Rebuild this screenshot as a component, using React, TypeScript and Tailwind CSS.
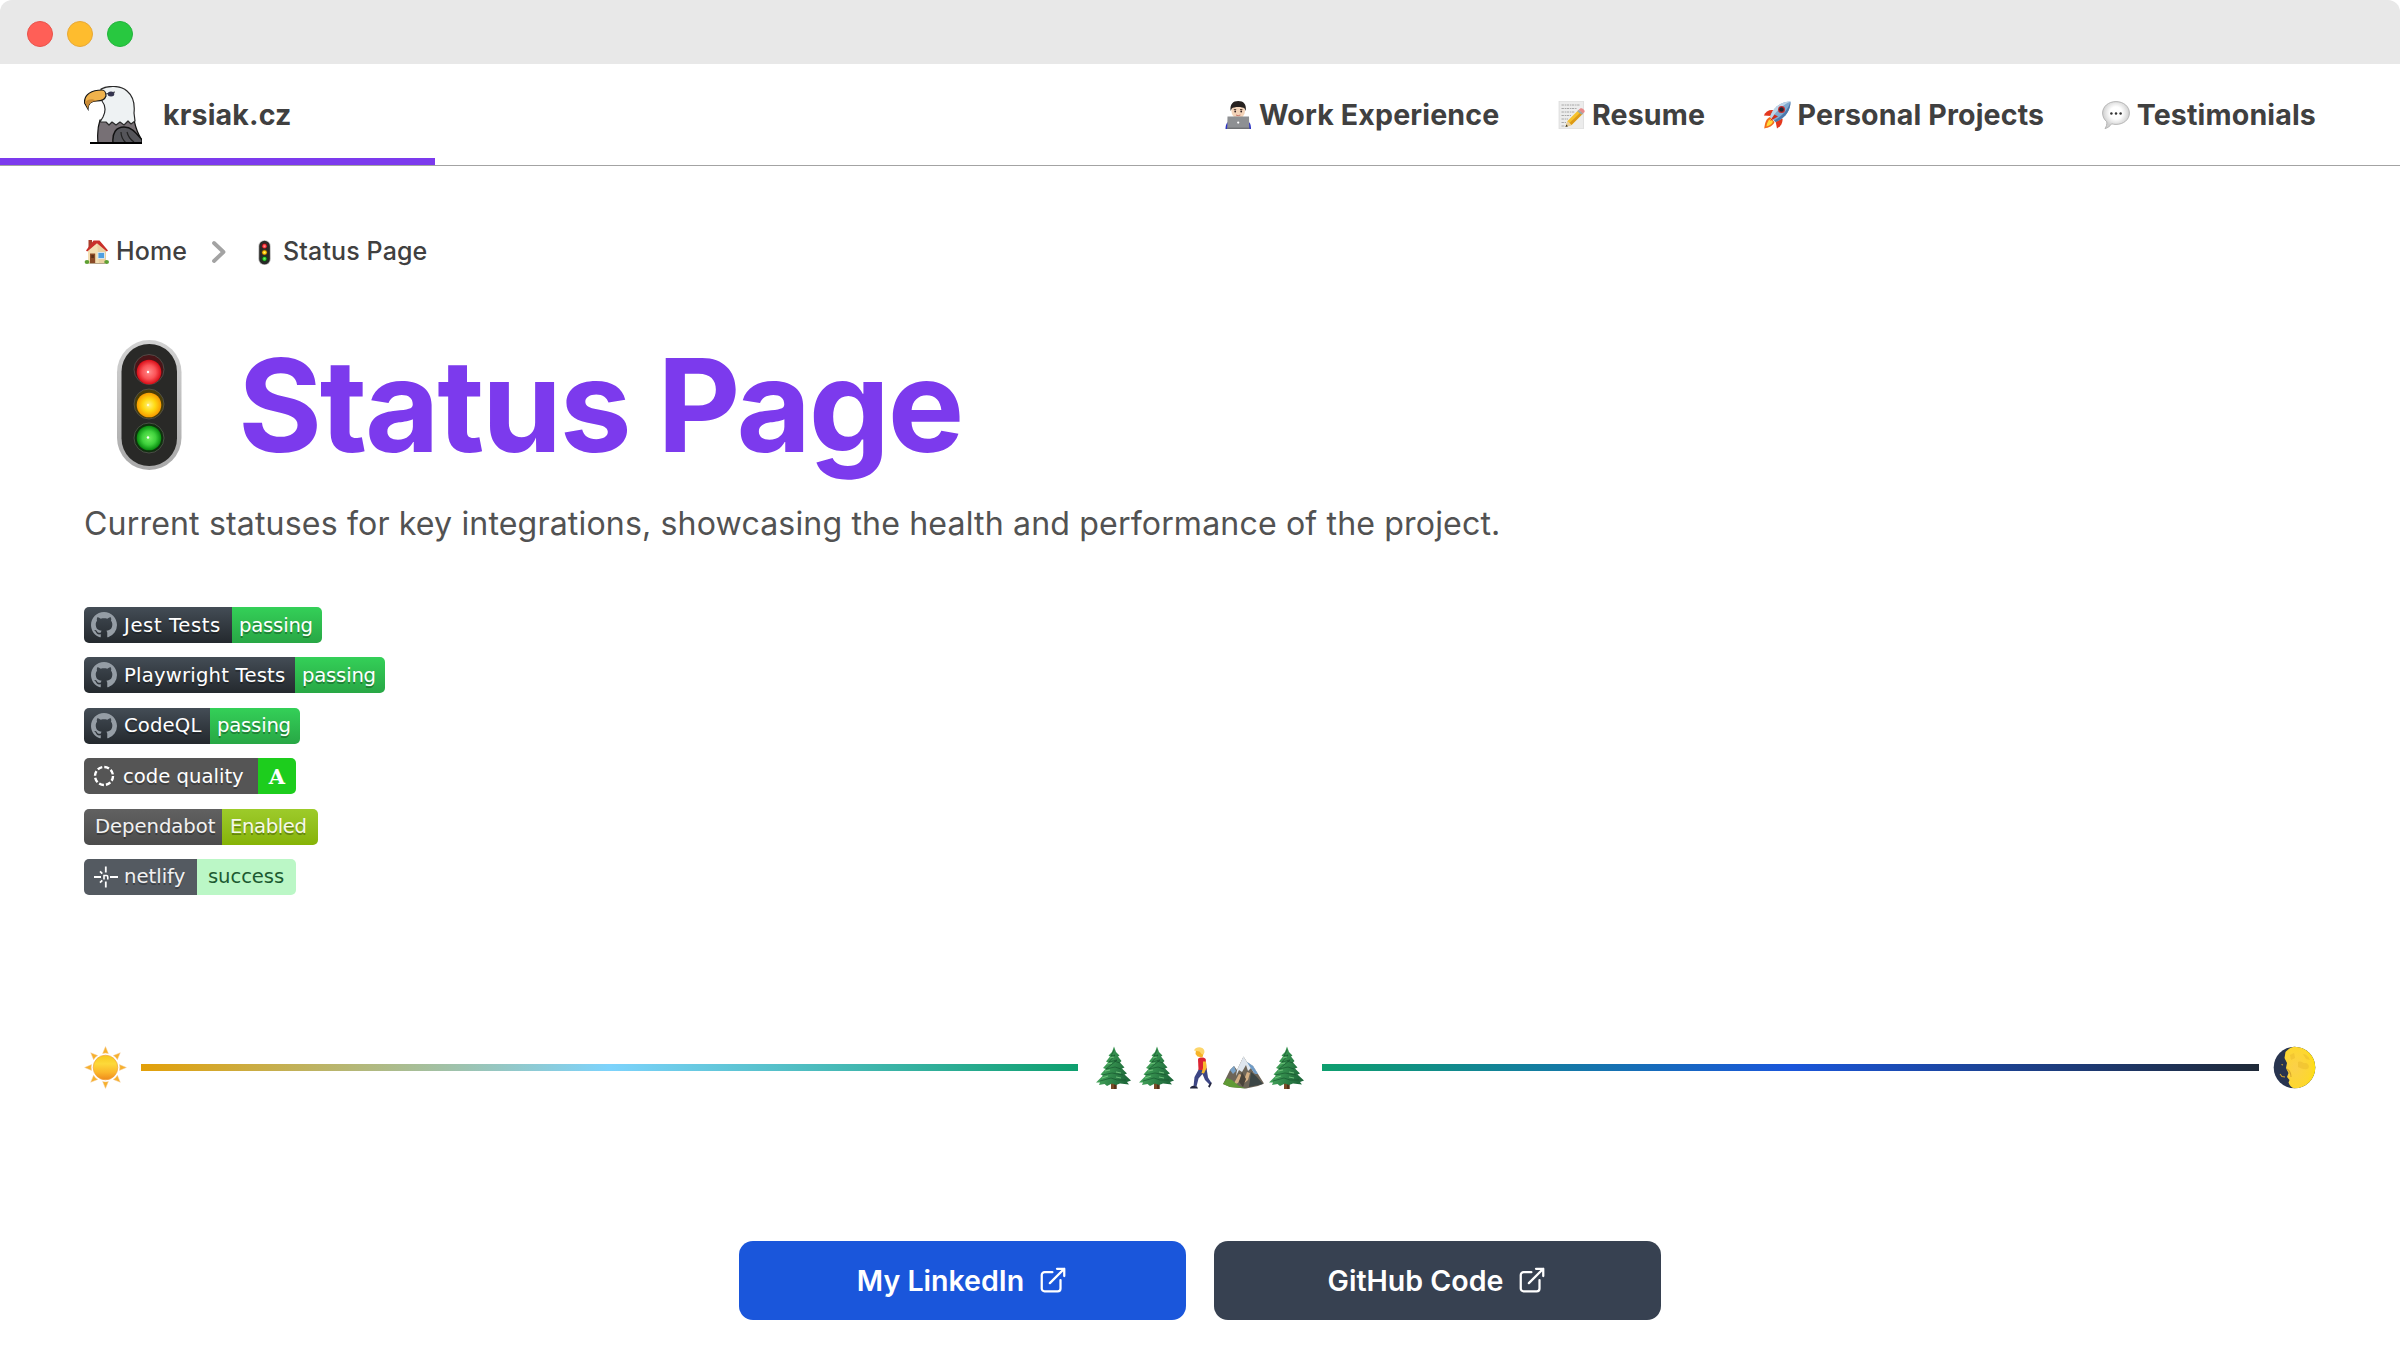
import type { ReactNode } from 'react';

type IconProps = { className?: string };

function Eagle({ className }: IconProps) {
  return (
    <svg viewBox="0 0 58 58" className={className}>
      <path d="M14 57C13 47 14 40 16 34L50 34C52 43 55 50 58 54V57Z" fill="#777075" stroke="#111" strokeWidth="1.2" />
      <path d="M29 57C28 47 32 41 40 41C48 41 52 47 58 54V57Z" fill="#55555a" stroke="#111" strokeWidth="1.4" />
      <path d="M37 46C37 51 39 54 42 57M43 46C44 50 47 54 50 56" stroke="#222" strokeWidth="1.2" fill="none" />
      <path d="M17 3C24 -0.5 36 -1 43 5C49 10 51 18 50 27L51 35L47 38L44 35L40 39L36 36L32 39L28 36L25 39L22 36L16 36L19 31C22 25 22 20 18 15Z" fill="#eef2f3" stroke="#2a2a2a" strokeWidth="1.2" strokeLinejoin="round" />
      <path d="M18 4C8 4 0 8 0.5 17L4 23C4 17 8 15 13 15C18 15 21 13 22 10C22 6 20 4 18 4Z" fill="#f0b24c" stroke="#161616" strokeWidth="1.2" />
      <path d="M1 16L4 23C4 18 7 15 13 15C8 12 4 13 1 16Z" fill="#c98a35" />
      <path d="M22 8L31 6" stroke="#333" strokeWidth="1" />
      <ellipse cx="27" cy="8" rx="3.3" ry="2.5" fill="#34344e" />
      <path d="M6 57H58" stroke="#000" strokeWidth="2" />
    </svg>
  );
}

function TrafficLight({ className }: IconProps) {
  return (
    <svg viewBox="0 0 130 130" className={className}>
      <defs>
        <linearGradient id="tl-rim" x1="0" y1="0" x2="0" y2="1">
          <stop offset="0" stopColor="#d2d2d2" />
          <stop offset="1" stopColor="#a9a9a9" />
        </linearGradient>
        <radialGradient id="tl-red">
          <stop offset="0" stopColor="#ff8a8a" />
          <stop offset="0.55" stopColor="#fb5458" />
          <stop offset="1" stopColor="#d90d17" />
        </radialGradient>
        <radialGradient id="tl-yellow">
          <stop offset="0" stopColor="#fff27e" />
          <stop offset="0.5" stopColor="#ffd912" />
          <stop offset="1" stopColor="#f79a00" />
        </radialGradient>
        <radialGradient id="tl-green">
          <stop offset="0" stopColor="#70ee5e" />
          <stop offset="0.55" stopColor="#3fd13c" />
          <stop offset="1" stopColor="#078a0e" />
        </radialGradient>
      </defs>
      <rect x="33" y="0" width="64.5" height="130" rx="32.2" fill="url(#tl-rim)" />
      <rect x="37.5" y="4" width="55.5" height="122" rx="27.7" fill="#292927" />
      <circle cx="65" cy="29.5" r="15" fill="#4a1518" stroke="#565650" strokeWidth="0.8" />
      <circle cx="65" cy="64" r="15" fill="#4a3e08" stroke="#565650" strokeWidth="0.8" />
      <circle cx="65" cy="98" r="15" fill="#10300f" stroke="#565650" strokeWidth="0.8" />
      <circle cx="65" cy="32" r="12.3" fill="url(#tl-red)" />
      <circle cx="65" cy="65" r="12.3" fill="url(#tl-yellow)" />
      <circle cx="65" cy="98" r="12.3" fill="url(#tl-green)" />
      <circle cx="64" cy="32" r="1.2" fill="#fff" />
      <circle cx="64" cy="65" r="1.2" fill="#fffbd0" />
      <circle cx="64" cy="97.5" r="1.2" fill="#fff" />
    </svg>
  );
}

function House({ className }: IconProps) {
  return (
    <svg viewBox="0 0 26 26" className={className}>
      <rect x="4.5" y="1" width="3.5" height="8" fill="#a8402c" />
      <path d="M4 11L13 3L22 11V24.5H4Z" fill="#f3deb2" />
      <path d="M13 3L22 11V24.5H15Z" fill="#ead0a0" />
      <path d="M2 11.5L9.5 1.5H15.5L24 11.5L22.8 12.5L13 4.2L3.2 12.5Z" fill="#c9302a" />
      <rect x="6" y="14.5" width="5.2" height="10" fill="#8a4a26" />
      <rect x="7.3" y="16" width="2.6" height="3" fill="#5b2f18" />
      <rect x="14" y="13.5" width="6.5" height="6" fill="#4f9fe0" stroke="#dce9f2" strokeWidth="0.9" />
      <ellipse cx="3" cy="23" rx="2.4" ry="1.9" fill="#5fa033" />
      <ellipse cx="22.6" cy="23" rx="2.4" ry="1.9" fill="#5fa033" />
      <rect x="5.5" y="24" width="16" height="1" fill="#b5a58c" />
    </svg>
  );
}

function Technologist({ className }: IconProps) {
  return (
    <svg viewBox="0 0 28 28" className={className}>
      <path d="M1.5 28C1.5 22 4 20 8 19H21C25 20 27 22 27 28Z" fill="#2b32c4" />
      <rect x="11" y="14" width="6" height="6" fill="#e0b595" />
      <ellipse cx="14.2" cy="9.8" rx="6.8" ry="7.6" fill="#f3d3b8" />
      <path d="M6.6 10C5.8 3 9 0 14.2 0C19.6 0 22.6 3 21.8 10L20.6 7.5C18.5 5.5 10 5.5 7.8 7.5Z" fill="#26211f" />
      <path d="M9.8 8.6H12.2M16 8.6H18.4" stroke="#3b2a20" strokeWidth="0.9" />
      <circle cx="11.2" cy="10.5" r="0.9" fill="#322" />
      <circle cx="17.2" cy="10.5" r="0.9" fill="#322" />
      <path d="M12 14Q14.2 15.4 16.4 14" stroke="#c46c60" strokeWidth="0.9" fill="none" />
      <path d="M3.5 15.5H25L25.3 28H3.2Z" fill="#8e9093" />
      <path d="M3.2 26.6H25.3V28H3.2Z" fill="#6f7174" />
      <circle cx="14.2" cy="21.6" r="1.1" fill="#fff" />
    </svg>
  );
}

function Memo({ className }: IconProps) {
  return (
    <svg viewBox="0 0 28 28" className={className}>
      <rect x="2" y="0" width="24.5" height="28" fill="#ececec" stroke="#d4d4d4" strokeWidth="0.6" />
      <path d="M4.5 4H23M4.5 7.5H20M4.5 11H18M4.5 14.5H14M4.5 18H11M4.5 21.5H9M4.5 25H8" stroke="#a0a0a0" strokeWidth="0.9" strokeDasharray="2.4 0.8 1.4 0.6" />
      <path d="M8.5 26L10.5 20L21.5 9L26 12.5L14.5 24Z" fill="#f6c22d" />
      <path d="M12.5 22L24 11L26 12.5L14.5 24Z" fill="#dd9a17" />
      <path d="M8.5 26L10.5 20L14.5 24Z" fill="#e8cf9f" />
      <path d="M8.5 26L9.3 23.6L11 25.2Z" fill="#333" />
      <path d="M21.5 9L23.2 7.4C25.5 7 28 9 27.6 11L26 12.5Z" fill="#e98a8a" />
      <path d="M20.2 10.3L21.6 8.9L26.2 12.4L24.8 13.8Z" fill="#9aa7ad" />
    </svg>
  );
}

function Rocket({ className }: IconProps) {
  return (
    <svg viewBox="0 0 28 28" className={className}>
      <path d="M10 9C6 8.5 2.5 10.5 0.8 14.5L8 15Z" fill="#e3371e" />
      <path d="M19.5 17.5C20 21.5 18 25 14 27.5L12.5 20Z" fill="#e3371e" />
      <path d="M7 16C3 17.5 2 22 1.2 27.5C6 26.5 10 25 11.5 21Z" fill="#f36b1c" />
      <path d="M7.5 18C5 19.5 4 22 3.4 25.5C6.5 24.5 8.6 23.4 10 20.8Z" fill="#ffdc3c" />
      <path d="M27.5 0.5C19 0.5 11 5 7 15.5L12.5 21C22.5 17 27.6 9.5 27.5 0.5Z" fill="#7fa9cf" />
      <path d="M27.5 0.5C19 0.5 11 5 7 15.5L9 17.5C13 10 19 4.5 27.5 0.5Z" fill="#bdd5e8" />
      <path d="M27.5 0.5C27.6 9.5 22.5 17 12.5 21L11 19.5C19 15.5 25 9 27.5 0.5Z" fill="#4c79ac" />
      <circle cx="18.5" cy="8.5" r="3.5" fill="#c62a2a" />
      <circle cx="18.5" cy="8.5" r="2.3" fill="#1f2937" />
      <path d="M11.5 13.5L15 15.5L7 20Z" fill="#cf2a1b" />
    </svg>
  );
}

function Speech({ className }: IconProps) {
  return (
    <svg viewBox="0 0 28 28" className={className}>
      <defs>
        <radialGradient id="sp-fill" cx="0.5" cy="0.42">
          <stop offset="0.45" stopColor="#fff" />
          <stop offset="1" stopColor="#cfcfcf" />
        </radialGradient>
      </defs>
      <path d="M14 0.6C21.6 0.6 27.4 5.6 27.4 12C27.4 18.6 21.6 23.4 14 23.4C12.4 23.4 11 23.2 9.6 22.8C8.2 25 6 26.8 3 27.6C4.4 25.6 5 23.4 4.8 20.8C2.2 18.600 0.600 15.600 0.600 12C0.600 5.600 6.400 0.600 14 0.600Z" fill="url(#sp-fill)" stroke="#b0b0b0" strokeWidth="0.9" />
      <circle cx="9.4" cy="12.4" r="1.25" fill="#333" />
      <circle cx="14" cy="12.4" r="1.25" fill="#333" />
      <circle cx="18.6" cy="12.4" r="1.25" fill="#333" />
    </svg>
  );
}

function Sun({ className }: IconProps) {
  const rays = [0, 45, 90, 135, 180, 225, 270, 315];
  return (
    <svg viewBox="0 0 43 43" className={className}>
      <defs>
        <linearGradient id="sun-disc" x1="0" y1="0" x2="0" y2="1">
          <stop offset="0" stopColor="#f6c81e" />
          <stop offset="0.35" stopColor="#fdd93a" />
          <stop offset="0.7" stopColor="#fbb62a" />
          <stop offset="1" stopColor="#ee8a1c" />
        </linearGradient>
      </defs>
      {rays.map((a) => (
        <path key={a} d="M18.6 7.6L21.5 0.6L24.4 7.6Q21.5 6.600 18.600 7.600Z" fill="#f7b02c" stroke="#f5cfa0" strokeWidth="0.5" transform={`rotate(${a} 21.5 21.5)`} />
      ))}
      <circle cx="21.5" cy="21.5" r="12.3" fill="url(#sun-disc)" stroke="#f0a43c" strokeWidth="0.7" />
    </svg>
  );
}

function Tree({ className }: IconProps) {
  return (
    <svg viewBox="0 0 43 43" className={className}>
      <defs>
        <linearGradient id="tree-leaf" x1="0" y1="0" x2="1" y2="0.3">
          <stop offset="0" stopColor="#55b868" />
          <stop offset="0.5" stopColor="#36914f" />
          <stop offset="1" stopColor="#1f6a3b" />
        </linearGradient>
      </defs>
      <path d="M19 34H24.5V43H19Z" fill="#7b4a26" />
      <path d="M22 34H24.5V43H22Z" fill="#56321a" />
      <path d="M22 0.5L24 6L27.5 9.500L26 10.500L29.500 15L28 16.500L32.500 21.500L30 22.500L35 27.500L32.500 28.500L39 34.500L35 36L37 38.500L28 37.500L24 39L20 37.500L15 40L12.500 38L7 39L8 36.500L4 36.500L11 29.500L8.500 28.500L13.500 23L11 22L16 16.500L14 15.500L18 10.500L16.500 9.500L20 6Z" fill="url(#tree-leaf)" />
      <path d="M22 4L19 10L23 9L17 16L25 14L14 23L23 21L29 23M10 29L20 27L31 29M8 35L19 32L25 34L34 34M22 15L28 17" stroke="#14502b" strokeWidth="1" fill="none" opacity="0.6" />
      <path d="M18 12L22 11M15 18L20 17M13 25L18 24M10 32L16 30M24 26L29 27M24 31L29 32" stroke="#79cc83" strokeWidth="1.1" fill="none" opacity="0.8" />
    </svg>
  );
}

function Walker({ className }: IconProps) {
  return (
    <svg viewBox="0 0 43 43" className={className}>
      <path d="M20.5 22L15.500 31L14.500 40.500H17.500L19.500 32.500L23.500 28L26 34L31 39L32.500 37L29 31.500L27.500 22Z" fill="#3d4684" />
      <path d="M11 42.500C11 40.500 13 40 14.500 39.800L18 40.600L19 42.500ZM29 40.200L31.500 36.800C33 36 33 37 32 39L30.500 41.800Z" fill="#23263f" />
      <path d="M19 13C20.500 11 26 11 26.800 13.500L27.500 24H19.500Z" fill="#dc2433" />
      <path d="M24 15.500H27L27.500 22L25 27.500L22.500 27L24 22Z" fill="#f8bb2c" />
      <path d="M17 3.500C18.500 1 24.500 1.500 25 5.500L23.500 11.500L18.500 10.500L16.500 8Z" fill="#f6b328" />
      <path d="M15 4.500C16.500 0.500 23.500 0 25.300 4.500C26 7 24.500 8.500 23 8.500L20.500 5.500Z" fill="#fdd66b" />
    </svg>
  );
}

function Mountain({ className }: IconProps) {
  return (
    <svg viewBox="0 0 43 43" className={className}>
      <path d="M1 38L8 24L12 20L15 24L21.5 10.5L25 16L31 20L36 28L42 37.5L36 40L24 42.5L8 41Z" fill="#6d6558" />
      <path d="M21.5 10.5L25 16L31 20L36 28L32 27L29 22L26 25L24 19L20 26L17 24L14 30L15 24Z" fill="#dfe6ee" />
      <path d="M25 16L31 20L36 28L33 28L28 21Z" fill="#6f9bc6" />
      <path d="M8 24L12 20L14 25L11 28Z" fill="#7aa3c9" />
      <path d="M17 28L11 39L16 37L20 29ZM25 26L20 39L26 34L28 27Z" fill="#d3ae83" />
      <path d="M29 26L27 41L41 38L34 30Z" fill="#3c4646" />
      <path d="M1 38L5 32L10 34L17 40L24 42.5L8 41Z" fill="#5f9a35" />
      <path d="M20 26L17 36L21 41L24 33Z" fill="#4a443b" />
    </svg>
  );
}

function Moon({ className }: IconProps) {
  return (
    <svg viewBox="0 0 43 43" className={className}>
      <defs>
        <radialGradient id="moon-lit" cx="0.35" cy="0.5" r="0.7">
          <stop offset="0" stopColor="#fbd04a" />
          <stop offset="0.7" stopColor="#fdd72f" />
          <stop offset="1" stopColor="#ffe400" />
        </radialGradient>
      </defs>
      <circle cx="21.5" cy="21.5" r="20.8" fill="#28344f" />
      <path d="M21.5 0.700A20.800 20.800 0 0 1 21.500 42.300C19 42 16.500 40 15.500 36.500L16.500 34L14 31L15.500 27L13 22L14 17L11.500 12L12.500 6C15 3 18 1 21.500 0.700Z" fill="url(#moon-lit)" />
      <path d="M25 16C28 14 30 18 33 17C36 18 37 22 34 23C31 24 28 22 25 21ZM30 8C33 8 36 11 37 14L33 13ZM17 9L21 7L22 12L18 14Z" fill="#e9ba2c" opacity="0.5" />
      <path d="M14 23C17 25 18 28 18 31M8.500 18.500L10 19M7 28L9 30.500L12 31" stroke="#d9a82c" strokeWidth="1.1" fill="none" />
    </svg>
  );
}

function ExternalLink() {
  return (
    <svg viewBox="0 0 24 24" className="size-[30px] shrink-0" fill="none" stroke="currentColor" strokeWidth="1.8" strokeLinecap="round" strokeLinejoin="round">
      <path d="M11.5 5.7H5.25A2.25 2.25 0 0 0 3 7.95V18.75A2.25 2.25 0 0 0 5.25 21H15.75A2.25 2.25 0 0 0 18 18.75V12" />
      <path d="M9.5 14.5L21 3M15.2 3H21V8.8" />
    </svg>
  );
}

function GitHubMark() {
  return (
    <svg viewBox="0 0 16 16" className="size-[26px] shrink-0" fill="#959da5">
      <path d="M8 0C3.58 0 0 3.58 0 8c0 3.54 2.29 6.53 5.47 7.59.4.07.55-.17.55-.38 0-.19-.01-.82-.01-1.49-2.01.37-2.53-.49-2.69-.94-.09-.23-.48-.94-.82-1.13-.28-.15-.68-.52-.01-.53.63-.01 1.08.58 1.23.82.72 1.21 1.87.87 2.33.66.07-.52.28-.87.51-1.07-1.78-.2-3.64-.89-3.64-3.95 0-.87.31-1.59.82-2.15-.08-.2-.36-1.02.08-2.12 0 0 .67-.21 2.2.82.64-.18 1.32-.27 2-.27.68 0 1.36.09 2 .27 1.53-1.04 2.2-.82 2.2-.82.44 1.1.16 1.92.08 2.12.51.56.82 1.27.82 2.15 0 3.07-1.87 3.75-3.65 3.95.29.25.54.73.54 1.48 0 1.07-.01 1.93-.01 2.2 0 .21.15.46.55.38A8.013 8.013 0 0 0 16 8c0-4.42-3.58-8-8-8z" />
    </svg>
  );
}

function DashedRing() {
  return (
    <svg viewBox="0 0 22 22" className="size-[22px] shrink-0" fill="none" stroke="#fff" strokeWidth="2.4">
      <circle cx="11" cy="11" r="9" strokeDasharray="5 2.07" />
    </svg>
  );
}

function NetlifyMark() {
  return (
    <svg viewBox="0 0 24 22" className="h-[22px] w-[24px] shrink-0" fill="none" stroke="#fff" strokeWidth="1.8">
      <path d="M0 11H7M16 11H24M11.8 0.500V6.500M11.800 15.500V21.500" />
      <path d="M6 5.300L8.300 7.600M6 16.700L8.300 14.400" />
      <path d="M10 13.500V9.500H12.500Q13.800 9.500 13.800 11V13.500" strokeWidth="1.6" />
    </svg>
  );
}

type BadgeProps = { left: ReactNode; right: ReactNode; leftClass: string; rightClass: string };

function Badge({ left, right, leftClass, rightClass }: BadgeProps) {
  return (
    <div className="flex h-9 overflow-hidden rounded-[5px] text-[19.64px] leading-[37px] whitespace-nowrap text-white">
      <div className={`flex shrink-0 items-center ${leftClass}`}>{left}</div>
      <div className={`flex shrink-0 items-center ${rightClass}`}>{right}</div>
    </div>
  );
}

const shadow = '[text-shadow:0_2px_0_rgba(1,1,1,0.3)]';
const ghLeft = 'gap-[7px] bg-linear-to-b from-[#444d56] to-[#24292e] pl-[7px] [text-shadow:0_2px_0_rgba(1,1,1,0.3)]';
const ghRight = 'w-[90px] bg-linear-to-b from-[#34d058] to-[#28a745] pl-[7px] tracking-[-0.2px] [text-shadow:0_2px_0_rgba(1,1,1,0.3)]';

const navItems = [
  { label: 'Work Experience', Icon: Technologist },
  { label: 'Resume', Icon: Memo },
  { label: 'Personal Projects', Icon: Rocket },
  { label: 'Testimonials', Icon: Speech },
];

export default function App() {
  return (
    <div className="h-[1360px] w-[2400px] overflow-hidden rounded-[12px] bg-white font-['Inter',sans-serif] text-[#404040]">
      <div className="flex h-16 items-center gap-[14px] bg-[#e8e8e8] pt-[4px] pl-[27px]">
        <span className="size-[26px] rounded-full border border-[#e9524a] bg-[#ff5f57]" />
        <span className="size-[26px] rounded-full border border-[#e8a835] bg-[#febc2e]" />
        <span className="size-[26px] rounded-full border border-[#20b43b] bg-[#28c840]" />
      </div>

      <header className="relative flex h-[102px] items-center justify-between border-b border-[#a3a3a3] px-[84px] text-[28.57px] font-bold tracking-[0.15px] whitespace-nowrap">
        <a className="flex items-center gap-[21px]">
          <Eagle className="size-[58px]" />
          <span className="pt-[2px]">krsiak.cz</span>
        </a>
        <nav className="flex items-center gap-[57.5px]">
          {navItems.map(({ label, Icon }) => (
            <a key={label} className="flex items-center gap-[7px]">
              <Icon className="size-[28px]" />
              <span className="pt-[2px]">{label}</span>
            </a>
          ))}
        </nav>
        <div className="absolute bottom-0 left-0 h-[7px] w-[435px] bg-[#7c3aed]" />
      </header>

      <main className="flex flex-col px-[84px] pt-[67px]">
        <nav className="flex h-[38px] items-center text-[25px] font-medium tracking-[0.12px] whitespace-nowrap">
          <House className="size-[26px]" />
          <span className="ml-[6px]">Home</span>
          <svg viewBox="0 0 16 24" className="ml-[24px] h-[24px] w-[16px]" fill="none" stroke="#a3a3a3" strokeWidth="3.8" strokeLinecap="round" strokeLinejoin="round">
            <path d="M3 3L12.5 12L3 21" />
          </svg>
          <TrafficLight className="ml-[25px] size-[25px]" />
          <span className="ml-[6px]">Status Page</span>
        </nav>

        <h1 className="mt-[69px] flex h-[130px] items-center gap-[24px] text-[128.57px] leading-[130px] font-bold tracking-[-2.4px] whitespace-nowrap text-[#7c3aed]">
          <TrafficLight className="size-[130px]" />
          <span>Status Page</span>
        </h1>
        <p className="mt-[31px] text-[32.14px] leading-[46px] tracking-[0.13px] whitespace-nowrap text-[#525252]">
          Current statuses for key integrations, showcasing the health and performance of the project.
        </p>

        <div className="mt-[60px] flex flex-col items-start gap-[14.4px] font-['Verdana','DejaVu_Sans',sans-serif]">
          <Badge leftClass={`w-[148px] tracking-[0.6px] ${ghLeft}`} rightClass={ghRight} left={<><GitHubMark />Jest Tests</>} right="passing" />
          <Badge leftClass={`w-[211px] tracking-[0.2px] ${ghLeft}`} rightClass={ghRight} left={<><GitHubMark />Playwright Tests</>} right="passing" />
          <Badge leftClass={`w-[126px] tracking-[0.15px] ${ghLeft}`} rightClass={ghRight} left={<><GitHubMark />CodeQL</>} right="passing" />
          <Badge
            leftClass={`w-[174px] gap-[8px] bg-[#555] pl-[9px] ${shadow}`}
            rightClass="w-[38px] justify-center bg-[#1dcd1d] font-['DejaVu_Serif',serif] text-[21px] font-bold"
            left={<><DashedRing />code quality</>}
            right="A"
          />
          <Badge
            leftClass={`w-[138px] bg-linear-to-b from-[#616161] to-[#4c4c4c] pl-[11px] tracking-[-0.05px] text-[#f2f2f2] ${shadow}`}
            rightClass={`w-[96px] bg-linear-to-b from-[#9dcb2a] to-[#86b305] pl-[8px] tracking-[-0.4px] text-[#f5f8ea] ${shadow}`}
            left="Dependabot"
            right="Enabled"
          />
          <Badge
            leftClass={`w-[113px] gap-[6px] bg-[#545a61] pl-[10px] text-[#f2f2f2] ${shadow}`}
            rightClass="w-[99px] bg-[#bbf7c6] pl-[11px] tracking-[-0.1px] text-[#1c5a31]"
            left={<><NetlifyMark />netlify</>}
            right="success"
          />
        </div>

        <div className="mt-[151px] flex h-[44px] items-center gap-[14px]">
          <Sun className="size-[43px] shrink-0" />
          <div className="h-[7px] flex-1 bg-linear-to-r/srgb from-[#e3a008] via-[#7dd3fc] to-[#0e9f6e]" />
          <div className="flex w-[216px] shrink-0 justify-between">
            <Tree className="size-[43px]" />
            <Tree className="size-[43px]" />
            <Walker className="size-[43px]" />
            <Mountain className="size-[43px]" />
            <Tree className="size-[43px]" />
          </div>
          <div className="h-[7px] flex-1 bg-linear-to-r/srgb from-[#0e9f6e] via-[#1a56db] to-[#1f2937]" />
          <Moon className="size-[43px] shrink-0" />
        </div>

        <div className="mt-[151px] flex justify-center gap-[28px] text-[28.57px] font-semibold whitespace-nowrap text-white">
          <a className="flex h-[79px] w-[447px] items-center justify-center gap-[14px] rounded-[14px] bg-[#1a56db]">
            <span className="pt-[1px]">My LinkedIn</span>
            <ExternalLink />
          </a>
          <a className="flex h-[79px] w-[447px] items-center justify-center gap-[14px] rounded-[14px] bg-[#374151]">
            <span className="pt-[1px]">GitHub Code</span>
            <ExternalLink />
          </a>
        </div>
      </main>
    </div>
  );
}
